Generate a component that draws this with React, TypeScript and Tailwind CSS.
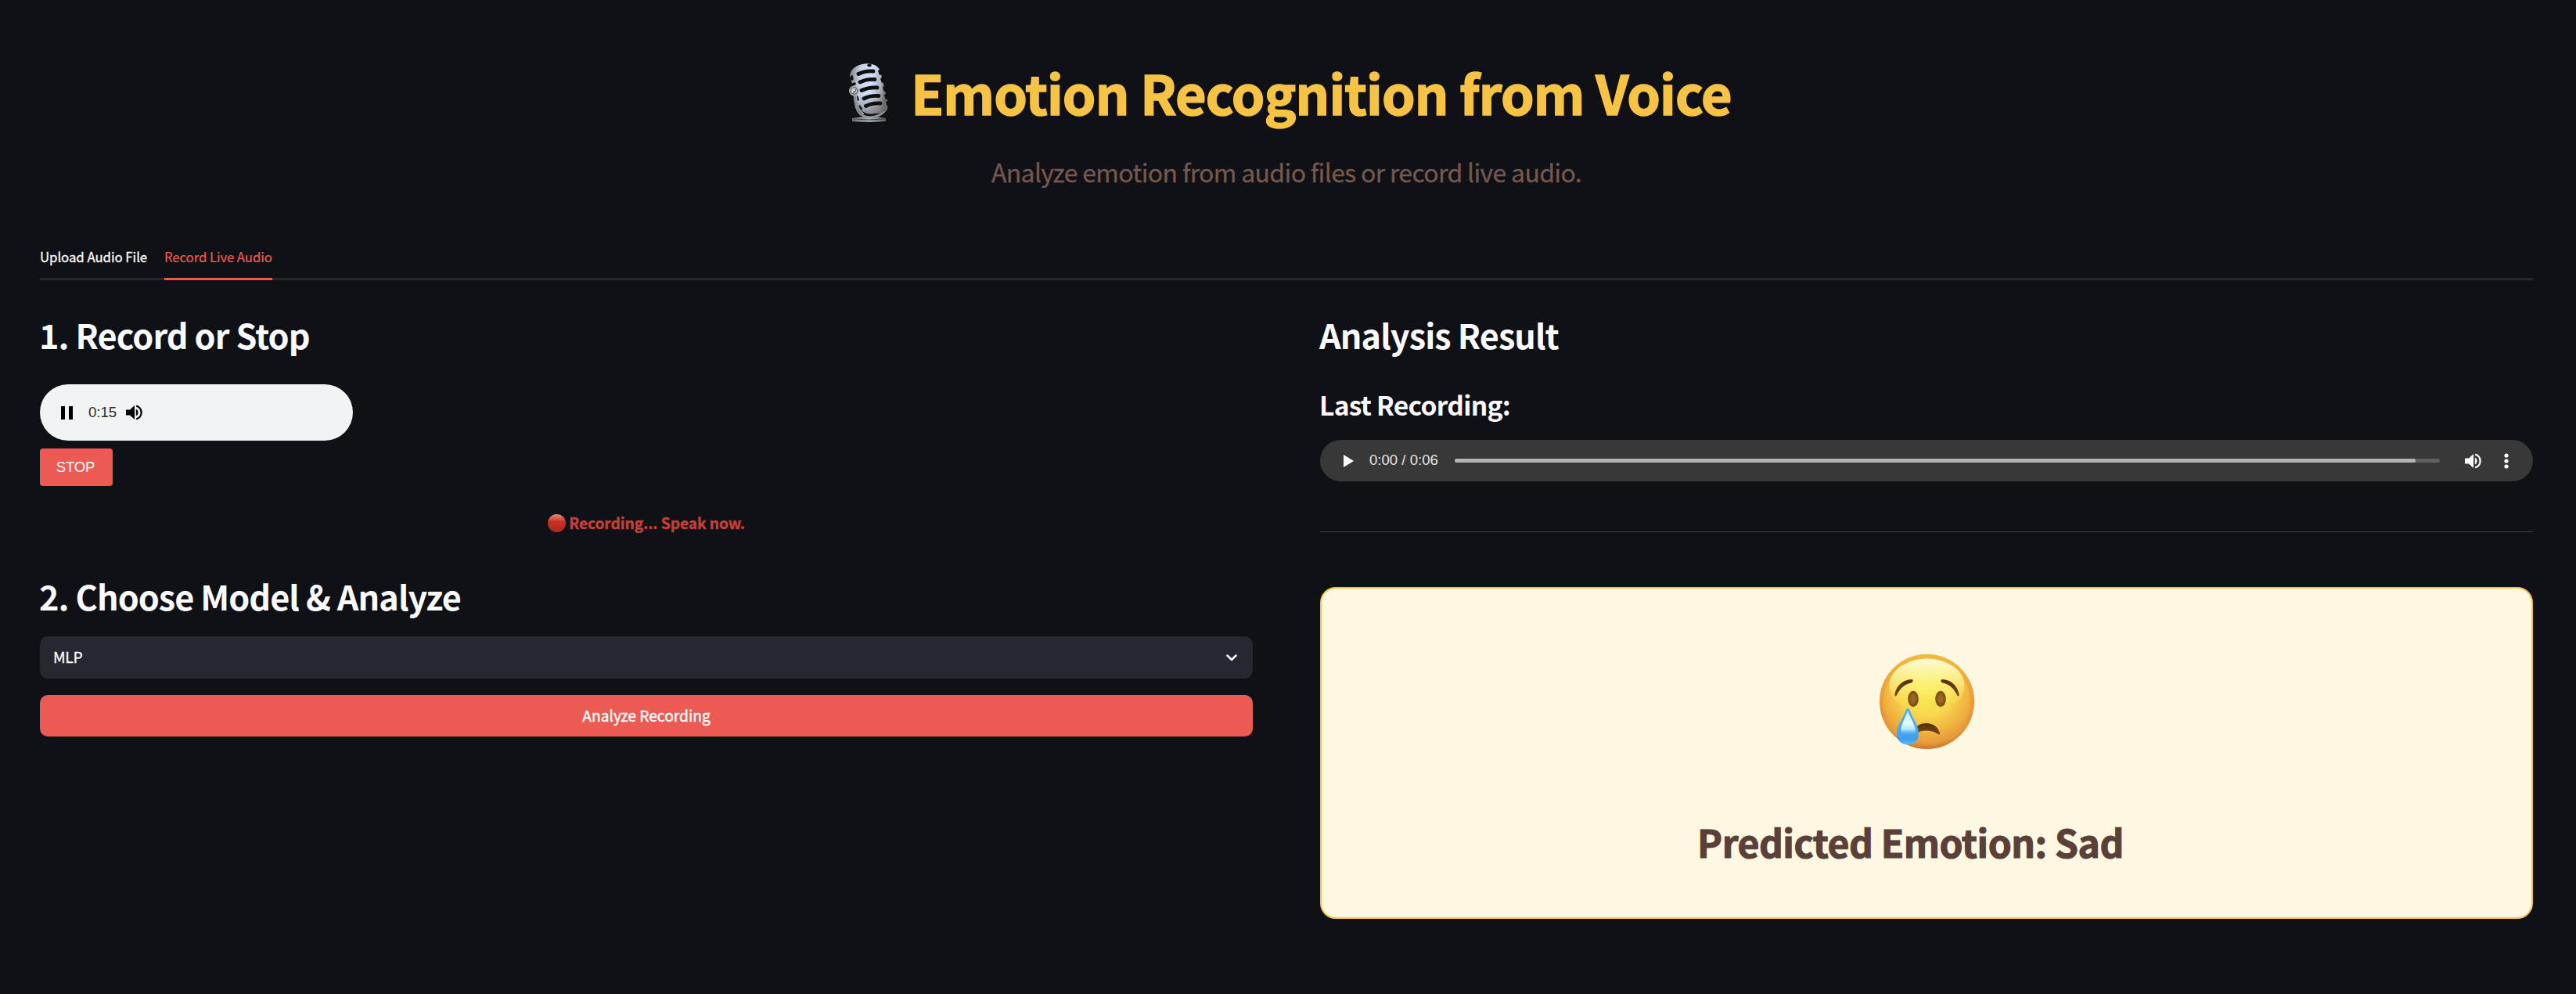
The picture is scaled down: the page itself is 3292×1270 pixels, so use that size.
import type { ReactNode } from "react";

function Microphone() {
  return (
    <svg viewBox="0 0 52 76" className="h-[76px] w-[52px] shrink-0">
      <defs>
        <linearGradient id="micBody" x1="0" y1="0" x2="1" y2="0.15">
          <stop offset="0" stopColor="#76797f" />
          <stop offset="0.3" stopColor="#c9d3e4" />
          <stop offset="0.6" stopColor="#d3e2fb" />
          <stop offset="0.85" stopColor="#a9afba" />
          <stop offset="1" stopColor="#66686d" />
        </linearGradient>
        <linearGradient id="micShade" x1="0" y1="0" x2="0" y2="1">
          <stop offset="0.6" stopColor="#77716f" stopOpacity="0" />
          <stop offset="1" stopColor="#6b6563" stopOpacity="0.7" />
        </linearGradient>
        <linearGradient id="micBase" x1="0" y1="0" x2="1" y2="0">
          <stop offset="0" stopColor="#6d7377" />
          <stop offset="0.5" stopColor="#a5acaf" />
          <stop offset="1" stopColor="#5d6164" />
        </linearGradient>
      </defs>
      <path d="M7 40 C8 55 10 65 21 68 C32 71 43 66 48 57" fill="none" stroke="#8a8d91" strokeWidth="3" />
      <path d="M4 70 Q25 66 47 70 V74 Q25 76 4 74 Z" fill="url(#micBase)" />
      <path d="M5 71 Q25 73 46 71" fill="none" stroke="#3c4144" strokeWidth="1" />
      <path d="M1 16 C2 7 9 2 20 0.5 C30 -0.5 38 3 40 10 L50 51 C51 59 44 64 33 64 C22 66 14 61 12 53 Z" fill="url(#micBody)" />
      <path d="M1 16 C2 7 9 2 20 0.5 C30 -0.5 38 3 40 10 L50 51 C51 59 44 64 33 64 C22 66 14 61 12 53 Z" fill="url(#micShade)" />
      <g fill="none" stroke="#0e0f11" strokeWidth="4.8" strokeLinecap="round">
        <path d="M12 13.5 Q21 9 31 10" />
        <path d="M14 24 Q23 19.500 33 20.500" />
        <path d="M16 34.500 Q26 30 36 31" />
        <path d="M19 45 Q28 40.500 38 41.500" />
        <path d="M21.500 54.500 Q30 50.500 40 51" />
      </g>
      <g fill="none" stroke="#0e0f11" strokeWidth="3.500" strokeLinecap="round">
        <path d="M3.500 17 L4 20" />
        <path d="M5 27 L7 26" />
        <path d="M25 2.500 L27 2.500" />
        <path d="M39 10 L40 13" />
        <path d="M42 20 L43 23" />
        <path d="M45 31 L46 34" />
        <path d="M47 41 L48 44" />
        <path d="M49 50 L50 53" />
        <path d="M10 43 L11 46" />
        <path d="M13 55 L15 58" />
      </g>
      <path d="M9 41 C10 52 12 60 19 65" fill="none" stroke="#a3a5a9" strokeWidth="2" />
      <circle cx="6.500" cy="35" r="6.500" fill="#aeb1b6" />
      <circle cx="6.500" cy="35" r="4.200" fill="#cfd3da" stroke="#62656a" strokeWidth="1.300" />
      <path d="M5 37 Q9 37 8.500 33" fill="none" stroke="#55585c" strokeWidth="1.300" />
    </svg>
  );
}

function CryingFace() {
  return (
    <svg viewBox="0 0 121 121" className="h-[121px] w-[121px]">
      <defs>
        <radialGradient id="face" cx="0.5" cy="0.38" r="0.64">
          <stop offset="0" stopColor="#fae94f" />
          <stop offset="0.4" stopColor="#f8d94f" />
          <stop offset="0.72" stopColor="#f0b03f" />
          <stop offset="0.88" stopColor="#e5993a" />
          <stop offset="1" stopColor="#bf6a27" />
        </radialGradient>
        <linearGradient id="rim" x1="0" y1="0" x2="0" y2="1">
          <stop offset="0" stopColor="#f2b93c" />
          <stop offset="0.5" stopColor="#e98f35" stopOpacity="0.5" />
          <stop offset="0.8" stopColor="#c8732d" stopOpacity="0" />
        </linearGradient>
        <linearGradient id="gloss" x1="0" y1="0" x2="0" y2="1">
          <stop offset="0" stopColor="#fffbd6" />
          <stop offset="0.35" stopColor="#fdf9a0" stopOpacity="0.75" />
          <stop offset="0.75" stopColor="#fcf36a" stopOpacity="0.25" />
          <stop offset="1" stopColor="#fae94f" stopOpacity="0" />
        </linearGradient>
        <linearGradient id="brow" x1="0" y1="0" x2="0" y2="1">
          <stop offset="0" stopColor="#55300c" />
          <stop offset="1" stopColor="#7b4a15" />
        </linearGradient>
        <radialGradient id="eye">
          <stop offset="0.35" stopColor="#9c671f" />
          <stop offset="1" stopColor="#77480f" />
        </radialGradient>
        <linearGradient id="tear" x1="0" y1="0" x2="0" y2="1">
          <stop offset="0" stopColor="#4aaef0" />
          <stop offset="0.55" stopColor="#4ba9f2" />
          <stop offset="0.85" stopColor="#3f9df0" />
          <stop offset="1" stopColor="#5cc0f7" />
        </linearGradient>
        <linearGradient id="tearGloss" x1="0" y1="0" x2="0" y2="1">
          <stop offset="0" stopColor="#bce9fb" />
          <stop offset="0.5" stopColor="#e6faff" />
          <stop offset="0.75" stopColor="#b5e5fc" />
          <stop offset="1" stopColor="#5db4f5" stopOpacity="0" />
        </linearGradient>
      </defs>
      <circle cx="60.500" cy="60.500" r="60.500" fill="url(#face)" />
      <circle cx="60.500" cy="60.500" r="58" fill="none" stroke="url(#rim)" strokeWidth="5" />
      <ellipse cx="60.500" cy="40" rx="48" ry="34.500" fill="url(#gloss)" />
      <path d="M19.500 51 C21 41 29 32.500 41 32 C43.500 32.500 43 36 40 36.500 C31 38.500 26 44 21.500 53 C20 54 19 53 19.500 51 Z" fill="url(#brow)" />
      <path d="M101.500 51 C100 41 92 32.500 80 32 C77.500 32.500 78 36 81 36.500 C90 38.500 95 44 99.500 53 C101 54 102 53 101.500 51 Z" fill="url(#brow)" />
      <ellipse cx="43" cy="57" rx="6.800" ry="10.200" fill="url(#eye)" />
      <ellipse cx="78" cy="57" rx="6.800" ry="10.200" fill="url(#eye)" />
      <path d="M43 99 C46 91 53 88 60 88 C68 88 75 93 77 101 C77 103 75.500 103 74 101.500 C66 96 55 97 49 99.500 Z" fill="url(#brow)" />
      <path d="M36 69 C38 69 39 73 40.500 76.500 C44 84 50 92 50 101.500 C50 110 44 115.500 36 115.500 C28 115.500 22 110 22 101.500 C22 92 28 84 31.500 76.500 C33 73 34 69 36 69 Z" fill="url(#tear)" />
      <path d="M36 72 C39 80 46 91 46 99 C45 105 28 105 27 99 C27 91 33 80 36 72 Z" fill="url(#tearGloss)" />
    </svg>
  );
}

function Speaker() {
  return (
    <svg viewBox="0 0 21 20" className="h-5 w-[21px] shrink-0" fill="currentColor">
      <path d="M0 6.600 H5 L11 1 V19 L5 13.400 H0 Z" />
      <path d="M12.800 5.500 A5 5 0 0 1 12.800 14.500 Z" />
      <path d="M13.200 1.600 A8.700 8.700 0 0 1 13.200 18.400" fill="none" stroke="currentColor" strokeWidth="2.300" />
    </svg>
  );
}

function Heading({ children }: { children: ReactNode }) {
  return (
    <h2 className="-ml-px h-15 whitespace-nowrap text-[43.2px] leading-[60px] font-semibold tracking-[-0.92px] text-[#fafafa]">
      {children}
    </h2>
  );
}

function LiveRecorder() {
  return (
    <>
      <div className="mt-[34px] flex h-[72px] w-[400px] items-center rounded-full bg-[#f1f3f5] pl-[27px] text-black">
        <svg viewBox="0 0 15 17" className="h-[17px] w-[15px]" fill="currentColor">
          <path d="M0 0 H5 V17 H0 Z M10 0 H15 V17 H10 Z" />
        </svg>
        <span className="ml-5 w-9 whitespace-nowrap font-['Liberation_Sans',sans-serif] text-[18.600px] leading-none text-[#2b2b2b]">0:15</span>
        <span className="ml-3">
          <Speaker />
        </span>
      </div>
      <button className="mt-2.5 block h-12 w-[93px] rounded bg-[#ed5a53] pr-0.5 text-center font-['Liberation_Sans',sans-serif] text-[18.600px] tracking-[-0.2px] text-white">
        STOP
      </button>
    </>
  );
}

function PlaybackBar() {
  return (
    <div className="mt-[21px] flex h-[53px] items-center rounded-full bg-[#383838] pr-[31px] pl-[30px] text-white">
      <svg viewBox="0 0 13 16" className="h-4 w-[13px]" fill="currentColor">
        <path d="M0 0 L13 8 L0 16 Z" />
      </svg>
      <span className="ml-5 w-[109px] whitespace-nowrap font-['Liberation_Sans',sans-serif] text-[18.600px] leading-none text-[#e6e6e6]">0:00 / 0:06</span>
      <div className="h-[5px] flex-1 rounded-full bg-[#5f5f5f]">
        <div className="h-full w-[97.5%] rounded-full bg-[#b5b5b5]" />
      </div>
      <span className="ml-8">
        <Speaker />
      </span>
      <svg viewBox="0 0 6 20" className="ml-[29px] h-5 w-1.5" fill="currentColor">
        <circle cx="3" cy="3" r="2.600" />
        <circle cx="3" cy="10" r="2.600" />
        <circle cx="3" cy="17" r="2.600" />
      </svg>
    </div>
  );
}

export default function App() {
  return (
    <div className="h-[1270px] w-[3292px] overflow-hidden bg-[#101116] pr-[55px] pl-[51px] font-['Noto_Sans_CJK_SC',sans-serif] text-[#fafafa]">
      <header className="pt-[78px]">
        <h1 className="flex h-20 items-start justify-center gap-[27px] pl-2.5 text-[68.200px] leading-[80px] font-bold tracking-[-0.85px] whitespace-nowrap text-[#f6c344] [-webkit-text-stroke:1.6px_#f6c344]">
          <span className="mt-[3px]">
            <Microphone />
          </span>
          <span>Emotion Recognition from Voice</span>
        </h1>
        <p className="mt-[37px] h-12 text-center text-[32px] leading-[48px] tracking-[-0.67px] text-[#75574b] [-webkit-text-stroke:0.3px_#75574b]">
          Analyze emotion from audio files or record live audio.
        </p>
      </header>

      <nav className="mt-[58px] flex h-[57px] border-b-[3px] border-[#27282d] text-[16.800px] leading-[54px] tracking-[-0.05px] whitespace-nowrap">
        <span className="w-[137px] [-webkit-text-stroke:0.3px_currentColor]">Upload Audio File</span>
        <span className="ml-[22px] h-[57px] w-[138px] border-b-[3px] border-[#ed5a53] tracking-[-0.1px] text-[#ed5a53] [-webkit-text-stroke:0.2px_currentColor]">
          Record Live Audio
        </span>
      </nav>

      <main className="grid grid-cols-2 gap-[86px] pt-[39px]">
        <section>
          <Heading>1. Record or Stop</Heading>
          <LiveRecorder />
          <p className="mt-[31px] flex h-8 items-center justify-center gap-1 text-[19.200px] leading-8 font-bold tracking-[-0.08px] text-[#c63f38] [-webkit-text-stroke:0.4px_#c63f38]">
            <span className="h-[23px] w-[23px] rounded-full bg-linear-to-b from-[#e98a84] via-[#cb3024] via-40% to-[#a42a20]" />
            <span>Recording... Speak now.</span>
          </p>
          <div className="mt-[47px]">
            <Heading>2. Choose Model &amp; Analyze</Heading>
          </div>
          <div className="mt-[22px] flex h-[54px] items-center justify-between rounded-[10px] bg-[#27282f] pr-5 pl-[17px] text-[19.200px] [-webkit-text-stroke:0.3px_currentColor]">
            <span className="-mt-0.5 tracking-[-0.3px]">MLP</span>
            <svg viewBox="0 0 14 9" className="h-[9px] w-3.5" fill="none" stroke="currentColor" strokeWidth="2.500" strokeLinecap="round" strokeLinejoin="round">
              <path d="M1.500 1.500 L7 7 L12.500 1.500" />
            </svg>
          </div>
          <button className="mt-[21px] block h-[53px] w-full rounded-[10px] bg-[#ed5a53] text-[19.200px] text-white [-webkit-text-stroke:0.4px_currentColor]">
            Analyze Recording
          </button>
        </section>

        <section>
          <Heading>Analysis Result</Heading>
          <h3 className="-ml-px mt-9 h-12 text-[33.600px] leading-[48px] font-semibold tracking-[-0.75px]">Last Recording:</h3>
          <PlaybackBar />
          <div className="mt-16 h-px bg-[#3f4044]" />
          <div className="mt-[70px] flex h-[424px] flex-col items-center rounded-[20px] border-2 border-[#f6c344] bg-[#fef7e1] pt-[84px]">
            <CryingFace />
            <p className="mt-[86px] h-16 pr-[41px] text-[48px] leading-[64px] font-bold tracking-[-0.48px] whitespace-nowrap text-[#5a4038] [-webkit-text-stroke:1.1px_#5a4038]">
              Predicted Emotion: Sad
            </p>
          </div>
        </section>
      </main>
    </div>
  );
}
